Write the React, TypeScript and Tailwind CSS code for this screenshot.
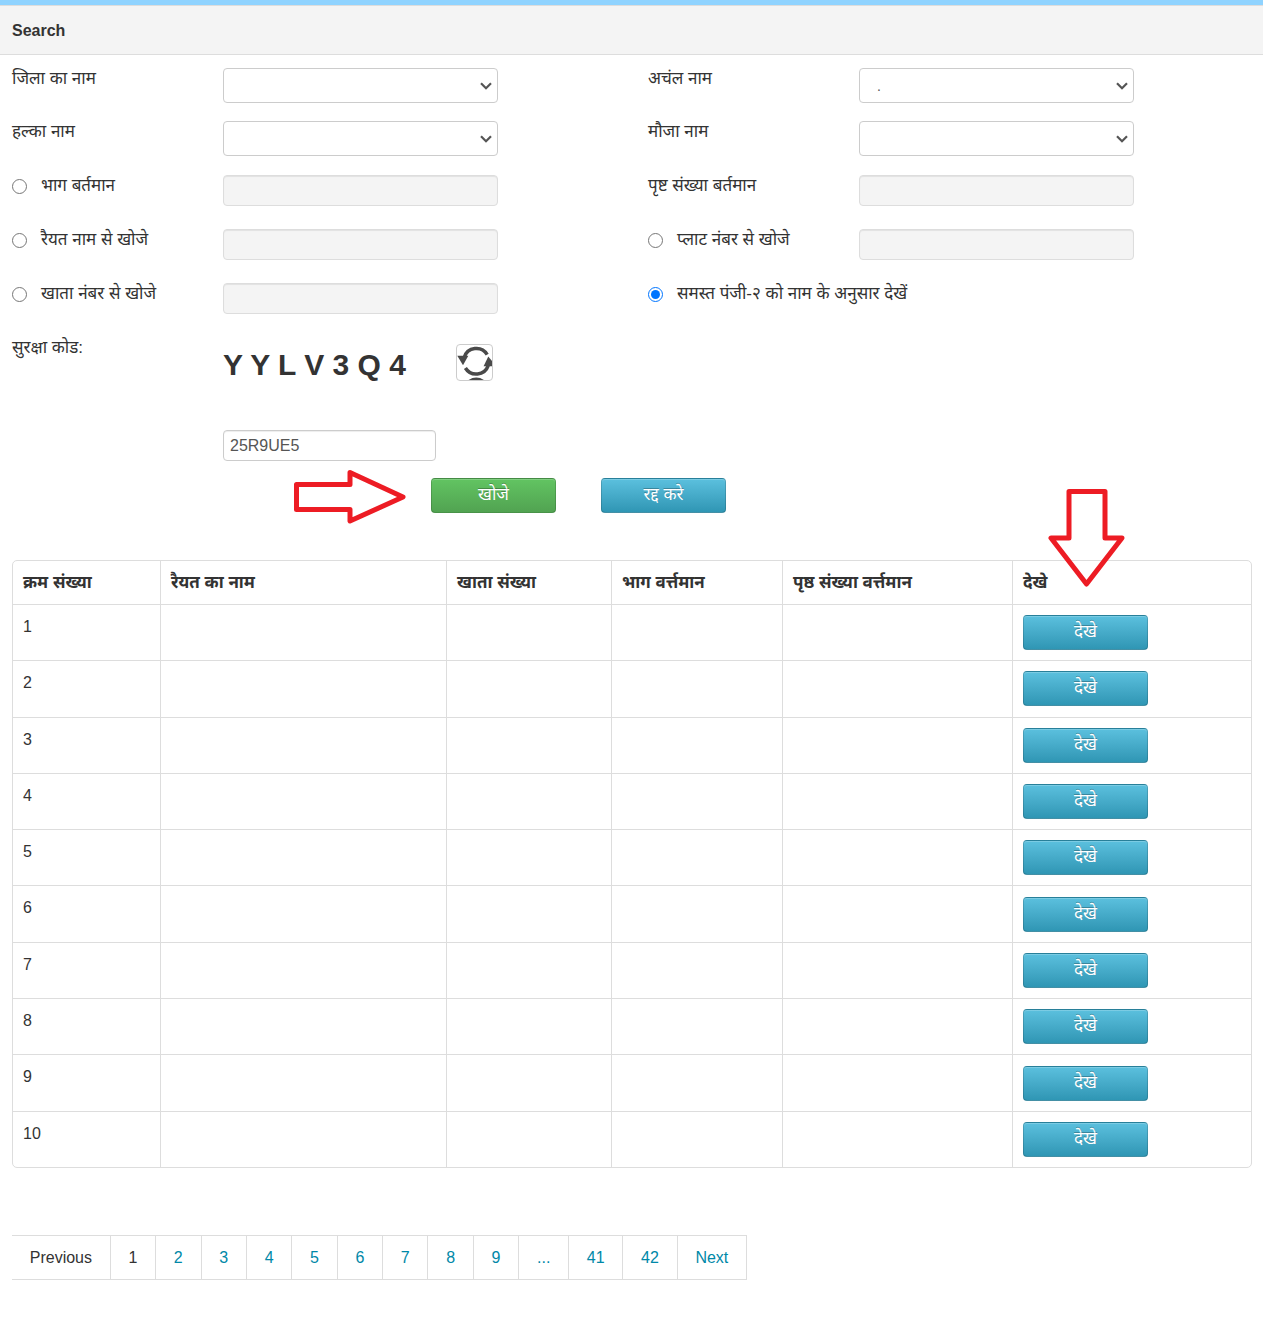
import React, { useState } from "react";

const columns = [
  "क्रम संख्या",
  "रैयत का नाम",
  "खाता संख्या",
  "भाग वर्त्तमान",
  "पृष्ठ संख्या वर्त्तमान",
];

const rows = [1, 2, 3, 4, 5, 6, 7, 8, 9, 10];

const pages = ["2", "3", "4", "5", "6", "7", "8", "9", "...", "41", "42", "Next"];

const labelClass = "w-[211px] shrink-0 text-[17px] leading-[22px]";
const inputClass =
  "block h-[31px] rounded-[4px] border px-[6px] text-[#555] shadow-[inset_0_1px_1px_rgba(0,0,0,0.075)]";
const buttonClass =
  "block h-[35px] w-[125px] rounded-[4px] border border-black/15 border-b-black/25 pb-[1px] text-[17px] leading-[20px] text-white shadow-[inset_0_1px_0_rgba(255,255,255,0.2)] [text-shadow:0_-1px_0_rgba(0,0,0,0.25)]";
const blueClass = "bg-linear-to-b from-[#5bc0de] to-[#2f96b4]";
const greenClass = "bg-linear-to-b from-[#62c462] to-[#51a351]";

interface SelectFieldProps {
  id: string;
  label: string;
  option?: string;
}

const SelectField: React.FC<SelectFieldProps> = ({ id, label, option = "" }) => (
  <div className="flex h-[53px] items-start">
    <label htmlFor={id} className={labelClass}>
      {label}
    </label>
    <div className="relative">
      <select
        id={id}
        className="block h-[35px] w-[275px] appearance-none rounded-[4px] border border-[#ccc] bg-white px-[17px] text-sm text-[#555]"
      >
        <option>{option}</option>
      </select>
      <svg
        viewBox="0 0 12 8"
        className="pointer-events-none absolute top-[14px] right-[6px] h-[8px] w-[12px]"
        fill="none"
        stroke="#555"
        strokeWidth="2.2"
      >
        <path d="M1 1.2L6 6.2L11 1.2" />
      </svg>
    </div>
  </div>
);

interface RadioFieldProps {
  value: string;
  label: string;
  mode: string;
  onChange: (value: string) => void;
  noInput?: boolean;
}

const RadioField: React.FC<RadioFieldProps> = ({ value, label, mode, onChange, noInput }) => (
  <div className="flex h-[54px] items-start">
    <label className={noInput ? "flex text-[17px] leading-[22px]" : `${labelClass} flex`}>
      <input
        type="radio"
        name="mode"
        className="mt-[4px] mr-[14px] size-[15px] shrink-0"
        checked={mode === value}
        onChange={() => onChange(value)}
      />
      {label}
    </label>
    {!noInput && (
      <input
        type="text"
        aria-label={label}
        disabled
        className={`${inputClass} w-[275px] border-[#ddd] bg-[#f4f4f4]`}
      />
    )}
  </div>
);

const RefreshIcon = () => (
  <svg viewBox="0 0 35 35" className="block size-full" fill="none" stroke="#4a4a4a" strokeWidth="3.5">
    <path d="M7.2 12.5A12.7 12.7 0 0 1 30.2 9.6" />
    <path d="M8.4 23A12.7 12.7 0 0 0 31.2 20.6" />
    <path d="M0.3 10.7H11.3L6 20.3Z" fill="#4a4a4a" stroke="none" />
    <path d="M31.3 11.5L26.6 21.2H35V16Z" fill="#4a4a4a" stroke="none" />
    <path d="M12.5 36.4A12.7 12.7 0 0 1 26 36.4" />
  </svg>
);

const App: React.FC = () => {
  const [mode, setMode] = useState("all");
  const [code, setCode] = useState("25R9UE5");

  return (
    <div className="min-h-screen bg-white pb-[38px] font-['Liberation_Sans','Noto_Sans',sans-serif] text-base text-[#333]">
      <header className="border-t-[5px] border-[#8fd3ff]">
        <h1 className="border-y border-[#ddd] bg-[#f4f4f4] px-3 pt-[15px] pb-[13px] leading-[20px] font-bold">
          Search
        </h1>
      </header>

      <main className="pr-[11px] pl-[12px]">
        <form onSubmit={(e) => e.preventDefault()}>
          <div className="grid grid-cols-[636px_1fr] pt-[13px]">
            <SelectField id="district" label="जिला का नाम" />
            <SelectField id="anchal" label="अचंल नाम" option="." />
            <SelectField id="halka" label="हल्का नाम" />
            <SelectField id="mauja" label="मौजा नाम" />
          </div>
          <div className="grid grid-cols-[636px_1fr] pt-[1px]">
            <RadioField value="part" label="भाग बर्तमान" mode={mode} onChange={setMode} />
            <div className="flex items-start">
              <label htmlFor="page" className={labelClass}>
                पृष्ट संख्या बर्तमान
              </label>
              <input
                id="page"
                type="text"
                disabled
                className={`${inputClass} w-[275px] border-[#ddd] bg-[#f4f4f4]`}
              />
            </div>
            <RadioField value="raiyat" label="रैयत नाम से खोजे" mode={mode} onChange={setMode} />
            <RadioField value="plot" label="प्लाट नंबर से खोजे" mode={mode} onChange={setMode} />
            <RadioField value="khata" label="खाता नंबर से खोजे" mode={mode} onChange={setMode} />
            <RadioField
              value="all"
              label="समस्त पंजी-२ को नाम के अनुसार देखें"
              mode={mode}
              onChange={setMode}
              noInput
            />
          </div>

          {/* security code */}
          <div className="flex items-start">
            <label htmlFor="captcha" className={labelClass}>
              सुरक्षा कोड:
            </label>
            <div className="pt-[7px]">
              <div className="flex items-start">
                <span className="w-[233px] text-[30px] leading-[42px] font-bold">
                  Y Y L V 3 Q 4
                </span>
                <button
                  type="button"
                  aria-label="Refresh code"
                  className="size-[37px] overflow-hidden rounded-[4px] border border-[#ccc]"
                >
                  <RefreshIcon />
                </button>
              </div>
              <input
                id="captcha"
                type="text"
                value={code}
                onChange={(e) => setCode(e.target.value)}
                className={`${inputClass} mt-[44px] w-[213px] border-[#ccc] bg-white`}
              />
            </div>
          </div>

          <div className="relative mt-[17px] flex gap-[45px] pl-[419px]">
            <svg
              viewBox="0 0 112 54"
              className="absolute -top-2 left-[282px] h-[54px] w-[112px]"
              fill="none"
              stroke="#ed1c24"
              strokeWidth="5"
              strokeLinejoin="round"
            >
              <path d="M2.5 14.5H56V2.5L109 27L56 51V39.5H2.5Z" />
            </svg>
            <button type="submit" className={`${buttonClass} ${greenClass}`}>
              खोजे
            </button>
            <button type="reset" className={`${buttonClass} ${blueClass}`}>
              रद्द करे
            </button>
          </div>
        </form>

        <div className="mt-[47px] rounded-[5px] border border-[#ddd]">
          <table className="h-[606px] w-full table-fixed border-separate border-spacing-0 text-left">
            <colgroup>
              <col className="w-[148px]" />
              <col className="w-[286px]" />
              <col className="w-[165px]" />
              <col className="w-[171px]" />
              <col className="w-[230px]" />
              <col />
            </colgroup>
            <thead>
              <tr className="h-[43px]">
                {columns.map((name) => (
                  <th
                    key={name}
                    className="border-r border-[#ddd] px-[10px] text-[17px] leading-[20px] font-bold"
                  >
                    {name}
                  </th>
                ))}
                <th className="relative px-[10px] text-[17px] leading-[20px] font-bold">
                  देखे
                  <svg
                    viewBox="0 0 78 98"
                    className="absolute -top-[72px] left-[35px] h-[98px] w-[78px]"
                    fill="none"
                    stroke="#ed1c24"
                    strokeWidth="5"
                    strokeLinejoin="round"
                  >
                    <path d="M21 2.5H57V49H74L38.5 95L3 49H21Z" />
                  </svg>
                </th>
              </tr>
            </thead>
            <tbody>
              {rows.map((n) => (
                <tr key={n} className="h-[56px]">
                  <td className="border-t border-r border-[#ddd] px-[10px] pt-[12px] align-top leading-[20px]">
                    {n}
                  </td>
                  <td className="border-t border-r border-[#ddd]" />
                  <td className="border-t border-r border-[#ddd]" />
                  <td className="border-t border-r border-[#ddd]" />
                  <td className="border-t border-r border-[#ddd]" />
                  <td className="border-t border-[#ddd] px-[10px]">
                    <button type="button" className={`${buttonClass} ${blueClass}`}>
                      देखे
                    </button>
                  </td>
                </tr>
              ))}
            </tbody>
          </table>
        </div>

        <nav aria-label="Pagination" className="mt-[67px]">
          <ul className="flex w-[735px] border-y border-r border-[#ddd] leading-[20px]">
            <li className="flex-auto px-[17px] pt-3 pb-[11px] text-center">Previous</li>
            <li className="flex-auto border-l border-[#ddd] px-[17px] pt-3 pb-[11px] text-center">1</li>
            {pages.map((p) => (
              <li key={p} className="flex-auto border-l border-[#ddd] text-center">
                <a href="#" className="block px-[17px] pt-3 pb-[11px] text-[#0088a8]">
                  {p}
                </a>
              </li>
            ))}
          </ul>
        </nav>
      </main>
    </div>
  );
};

export default App;
